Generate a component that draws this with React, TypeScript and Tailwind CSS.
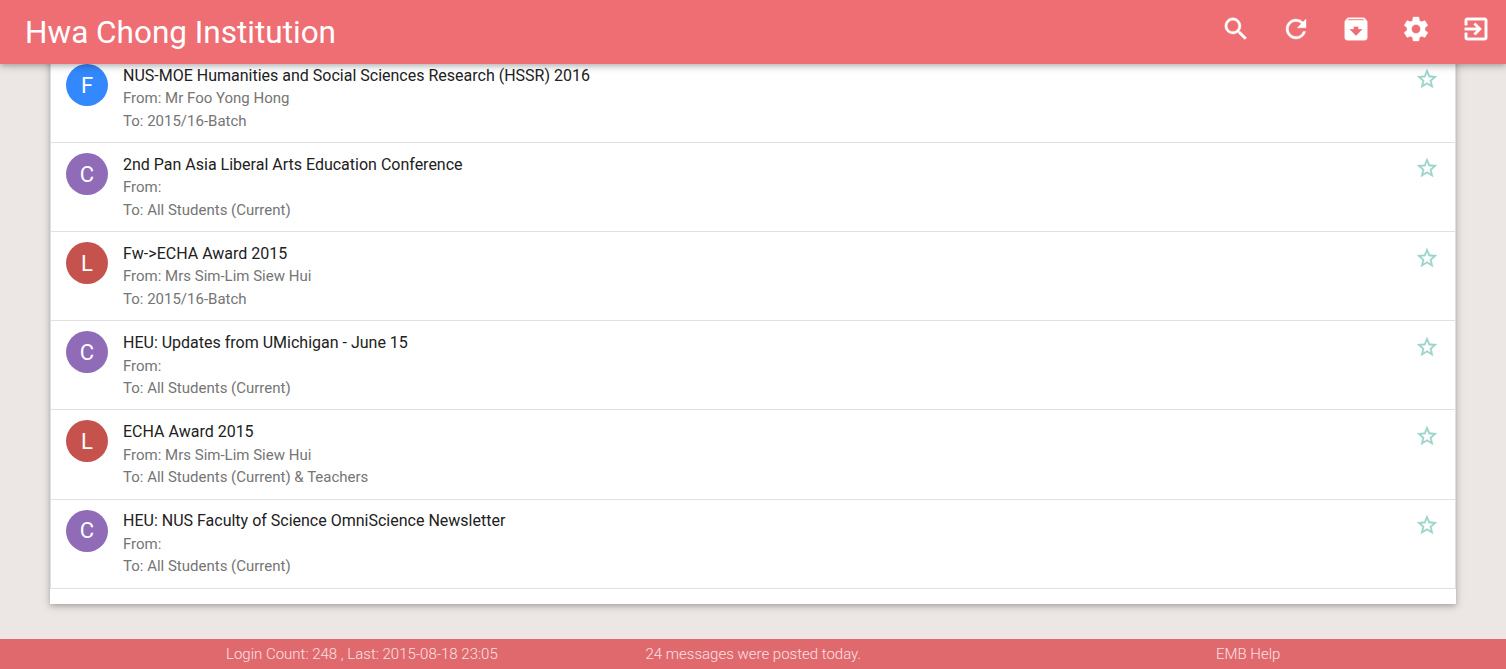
import { MdSearch, MdRefresh, MdArchive, MdSettings, MdExitToApp, MdStarBorder } from "react-icons/md";

type Message = { initial: string; color: string; title: string; from: string; to: string };

const messages: Message[] = [
  { initial: "F", color: "bg-[#3388fd]", title: "NUS-MOE Humanities and Social Sciences Research (HSSR) 2016", from: "Mr Foo Yong Hong", to: "2015/16-Batch" },
  { initial: "C", color: "bg-[#8f6bb8]", title: "2nd Pan Asia Liberal Arts Education Conference", from: "", to: "All Students (Current)" },
  { initial: "L", color: "bg-[#c6524e]", title: "Fw->ECHA Award 2015", from: "Mrs Sim-Lim Siew Hui", to: "2015/16-Batch" },
  { initial: "C", color: "bg-[#8f6bb8]", title: "HEU: Updates from UMichigan - June 15", from: "", to: "All Students (Current)" },
  { initial: "L", color: "bg-[#c6524e]", title: "ECHA Award 2015", from: "Mrs Sim-Lim Siew Hui", to: "All Students (Current) & Teachers" },
  { initial: "C", color: "bg-[#8f6bb8]", title: "HEU: NUS Faculty of Science OmniScience Newsletter", from: "", to: "All Students (Current)" },
];

const navIcons = [MdSearch, MdRefresh, MdArchive, MdSettings, MdExitToApp];

function Row({ m }: { m: Message }) {
  return (
    <li className="flex h-[89.2px] items-start border-b border-[#e0e0e0] pl-[15px] pr-[16px] pt-[10px]">
      <div className={`flex size-[42px] shrink-0 items-center justify-center rounded-full pt-[0.8px] text-[22px] text-white ${m.color}`}>{m.initial}</div>
      <div className="ml-[15px] flex-1 pt-[0.875px] text-[15px] leading-[22.5px] text-[#757575]">
        <p className="text-[16px] text-[#212121]">{m.title}</p>
        <p>From: {m.from}</p>
        <p>To: {m.to}</p>
      </div>
      <MdStarBorder className="mt-[3.5px] size-6 text-[#9bd4cb] [&>path:last-child]:stroke-[0.3]" />
    </li>
  );
}

export default function App() {
  return (
    <div className="flex h-[669px] flex-col overflow-hidden bg-[#ece7e4] font-[Roboto,sans-serif]">
      <header className="z-10 flex h-16 shrink-0 items-center justify-between bg-[#ef6e73] pl-[25px] pr-[15px] text-white shadow-[0_2px_5px_0_rgba(0,0,0,0.2),0_2px_10px_0_rgba(0,0,0,0.14)]">
        <h1 className="pt-px text-[31.5px] leading-16">Hwa Chong Institution</h1>
        <nav className="-mt-1.5 flex gap-[30px]">
          {navIcons.map((Icon, i) => <Icon key={i} className="size-[30px] [&>path:last-child]:stroke-[0.3]" />)}
        </nav>
      </header>
      <main className="flex-1 px-[50px]">
        <div className="-mt-[11px] h-[551px] bg-white pt-[0.625px] shadow-[0_2px_5px_0_rgba(0,0,0,0.2),0_2px_10px_0_rgba(0,0,0,0.14)]">
          <ul className="border-x border-[#e0e0e0]">
            {messages.map((m) => <Row key={m.title} m={m} />)}
          </ul>
        </div>
      </main>
      <footer className="flex h-[30px] shrink-0 items-center bg-[#e0696e] text-[15px] font-light text-[#fbe1e2]">
        <span className="ml-[226px] w-[419.5px]">Login Count: 248 , Last: 2015-08-18 23:05</span>
        <span className="w-[570.5px]">24 messages were posted today.</span>
        <span>EMB Help</span>
      </footer>
    </div>
  );
}
